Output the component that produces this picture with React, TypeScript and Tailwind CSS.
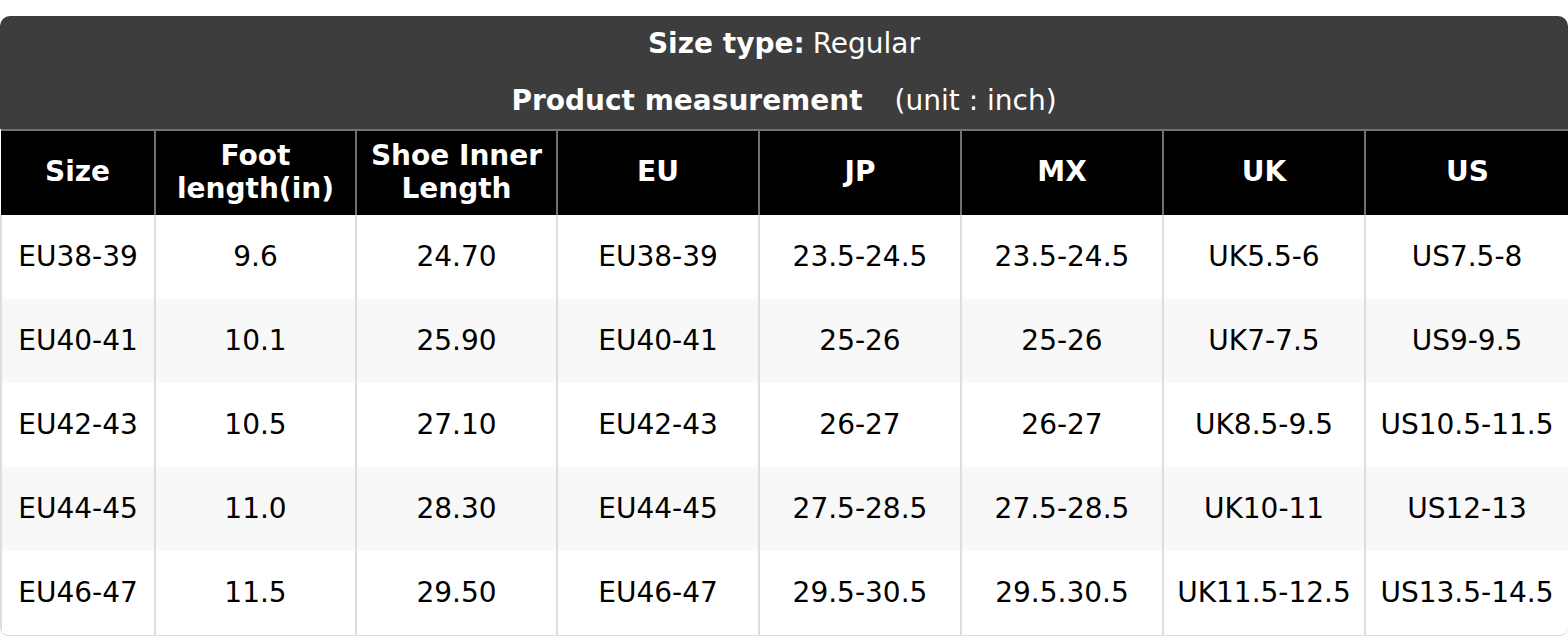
const columns = ["Size", "Foot length(in)", "Shoe Inner Length", "EU", "JP", "MX", "UK", "US"]

const rows = [
  ["EU38-39", "9.6", "24.70", "EU38-39", "23.5-24.5", "23.5-24.5", "UK5.5-6", "US7.5-8"],
  ["EU40-41", "10.1", "25.90", "EU40-41", "25-26", "25-26", "UK7-7.5", "US9-9.5"],
  ["EU42-43", "10.5", "27.10", "EU42-43", "26-27", "26-27", "UK8.5-9.5", "US10.5-11.5"],
  ["EU44-45", "11.0", "28.30", "EU44-45", "27.5-28.5", "27.5-28.5", "UK10-11", "US12-13"],
  ["EU46-47", "11.5", "29.50", "EU46-47", "29.5-30.5", "29.5.30.5", "UK11.5-12.5", "US13.5-14.5"],
]

const widths = ["w-[154px]", "w-[201px]", "w-[201px]", "w-[202px]", "w-[202px]", "w-[202px]", "w-[202px]", "w-[204px]"]

export default function App() {
  return (
    <div className="min-h-screen bg-white pt-4 font-['DejaVu_Sans',sans-serif]">
      <div className="overflow-hidden rounded-[10px] border-b-2 border-[#dddddd]">
        <div className="flex h-[113px] flex-col items-center bg-[#3d3d3d] text-[28px] text-white">
          <div className="flex h-[56px] items-center">
            <span className="font-bold">Size type:</span>
            <span className="ml-2">Regular</span>
          </div>
          <div className="flex h-[57px] items-center">
            <span className="font-bold">Product measurement</span>
            <span className="ml-8">(unit : inch)</span>
          </div>
        </div>
        <table className="w-full table-fixed border-collapse">
          <colgroup>
            {widths.map((w, i) => (
              <col key={i} className={w} />
            ))}
          </colgroup>
          <thead>
            <tr className="h-[85px] bg-black">
              {columns.map((c, i) => (
                <th
                  key={c}
                  className={`border-t-2 border-[#707070] px-1 pb-[3px] text-[28px] leading-[33px] font-bold text-white ${
                    i > 0 ? "border-l-2" : ""
                  }`}
                >
                  {c === "Foot length(in)" ? (
                    <>
                      Foot
                      <br />
                      length(in)
                    </>
                  ) : c === "Shoe Inner Length" ? (
                    <>
                      Shoe Inner
                      <br />
                      Length
                    </>
                  ) : (
                    c
                  )}
                </th>
              ))}
            </tr>
          </thead>
          <tbody>
            {rows.map((r, ri) => (
              <tr key={ri} className={`h-[84px] ${ri % 2 === 1 ? "bg-[#f8f8f8]" : "bg-white"}`}>
                {r.map((v, ci) => (
                  <td
                    key={ci}
                    className={`border-l-2 border-[#dddddd] text-center text-[28px] text-black ${
                      ci === r.length - 1 ? "border-r-2" : ""
                    }`}
                  >
                    {v}
                  </td>
                ))}
              </tr>
            ))}
          </tbody>
        </table>
      </div>
    </div>
  )
}
